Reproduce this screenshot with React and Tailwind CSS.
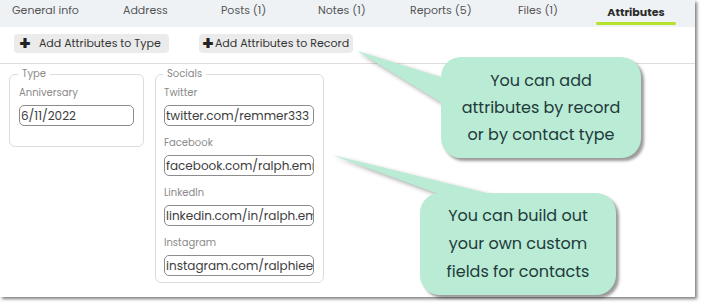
import React from "react";

const font = { fontFamily: "Poppins, 'Open Sans', 'Noto Sans', sans-serif" };

function Field({ label, value, w, first }) {
  return (
    <div className="flex flex-col">
      <div className={`text-[10px] leading-[12px] text-[#8a8a8a] ${first ? "mt-[7px]" : "mt-[0px]"}`}>{label}</div>
      <div className={`mt-[6px] h-[21px] ${w} border border-[#8c8c8c] rounded-[5px] overflow-hidden whitespace-nowrap text-[12px] leading-[19px] text-[#3d3d3d] pl-[1px]`}>
        {value}
      </div>
    </div>
  );
}

export default function App() {
  const tabs = [
    ["General info", "w-[111px]"],
    ["Address", "w-[98px]"],
    ["Posts (1)", "w-[97px]"],
    ["Notes (1)", "w-[92px]"],
    ["Reports (5)", "w-[108px]"],
    ["Files (1)", "w-[80px]"],
  ];
  return (
    <div className="w-[704px] h-[307px] bg-white relative overflow-hidden" style={font}>
      <div className="w-[695px] h-[297px] bg-white shadow-[2px_2px_3px_rgba(0,0,0,0.5)] flex flex-col">
        <div className="h-[27px] bg-[#eef2f5] flex items-start text-[11px] text-[#555]">
          <div className="w-[12px]" />
          {tabs.map(([t, c], i) => (
            <div key={i} className={`${c} pt-[2px] leading-[16px] whitespace-nowrap`}>{t}</div>
          ))}
          <div className="ml-[-2px] w-[80px] flex flex-col items-center">
            <div className="pt-[4px] leading-[16px] font-bold text-[11px] text-[#2b2b2b]">Attributes</div>
            <div className="mt-[2px] h-[3px] w-[80px] rounded-full bg-[#b3e22b]" />
          </div>
        </div>
        <div className="h-[37px] flex items-start pt-[7px] pl-[14px] gap-[30px] border-b border-[#dedede] text-[11px] text-[#333] whitespace-nowrap">
          <div className="h-[19px] w-[155px] rounded-[4px] bg-[#ebebeb] flex items-center pl-[5px] gap-[8px]">
            <span className="text-[19px] leading-[17px] font-bold text-[#222]">+</span>
            <span>Add Attributes to Type</span>
          </div>
          <div className="h-[19px] w-[154px] rounded-[4px] bg-[#ebebeb] flex items-center pl-[3px] gap-[1px]">
            <span className="text-[19px] leading-[17px] font-bold text-[#222]">+</span>
            <span>Add Attributes to Record</span>
          </div>
        </div>
        <div className="flex items-start pl-[9px] pt-[4px] gap-[11px]">
          <fieldset className="w-[135px] h-[79px] border border-[#dcdcdc] rounded-[6px] px-[9px]">
            <legend className="text-[10px] leading-[12px] text-[#8a8a8a] px-[4px] ml-[-1px]">Type</legend>
            <Field first label="Anniversary" value="6/11/2022" w="w-[115px]" />
          </fieldset>
          <fieldset className="w-[169px] h-[215px] border border-[#dcdcdc] rounded-[6px] px-[8px]">
            <legend className="text-[10px] leading-[12px] text-[#8a8a8a] px-[4px] ml-[-1px]">Socials</legend>
            <Field first label="Twitter" value="twitter.com/remmer333" w="w-[150px]" />
            <div className="h-[11px]" />
            <Field label="Facebook" value="facebook.com/ralph.emmerson" w="w-[150px]" />
            <div className="h-[11px]" />
            <Field label="LinkedIn" value="linkedin.com/in/ralph.emmerson" w="w-[150px]" />
            <div className="h-[11px]" />
            <Field label="Instagram" value="instagram.com/ralphieemmerson" w="w-[150px]" />
          </fieldset>
        </div>
      </div>

      <svg className="absolute left-0 top-0 pointer-events-none" width="704" height="307" style={{ filter: "drop-shadow(2px 2px 2px rgba(0,0,0,0.35))" }}>
        <polygon points="357,51 450,80 450,108" fill="#b9ebd5" />
        <polygon points="332,155 455,200 515,200" fill="#b9ebd5" />
      </svg>

      <div className="absolute left-[441px] top-[57px] w-[200px] h-[101px] rounded-[20px] bg-[#b9ebd5] shadow-[3px_3px_3px_rgba(0,0,0,0.4)] flex flex-col items-center justify-center text-[16px] leading-[27px] text-[#1f3a3a]">
        <div>You can add</div>
        <div>attributes by record</div>
        <div>or by contact type</div>
      </div>
      <div className="absolute left-[420px] top-[193px] w-[196px] h-[102px] rounded-[20px] bg-[#b9ebd5] shadow-[3px_3px_3px_rgba(0,0,0,0.4)] flex flex-col items-center justify-center text-[16px] leading-[28px] text-[#1f3a3a]">
        <div>You can build out</div>
        <div>your own custom</div>
        <div>fields for contacts</div>
      </div>
    </div>
  );
}
